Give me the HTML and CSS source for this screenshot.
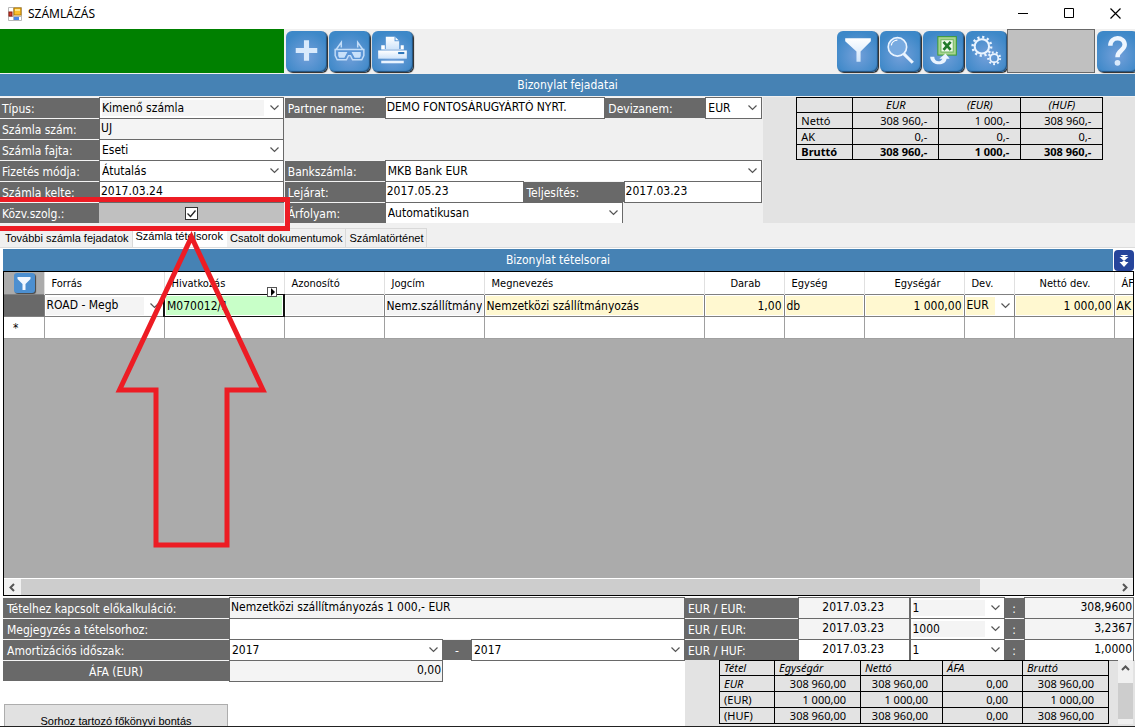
FILE: index.html
```html
<!DOCTYPE html>
<html lang="hu">
<head>
<meta charset="utf-8">
<title>SZÁMLÁZÁS</title>
<link rel="stylesheet" href="styles.css">
</head>
<body>
<header class="titlebar">
  <svg class="app-icon" width="14" height="14" viewBox="0 0 14 14"><path d="M.5.5h13v13H.5zM5.500 .5v13M.5 9.500h13" fill="#fff" stroke="#b8b8b8"/><rect x="6" y="1" width="7" height="7" fill="#fbc02d" stroke="#b57a00"/><path d="M7 2h5v2H7z" fill="#ffe48a"/><rect x="1" y="5" width="3" height="4" fill="#d2402c" stroke="#8e1b10"/><rect x="6" y="10" width="5" height="3" fill="#4a86e8"/></svg>
  <h1>SZÁMLÁZÁS</h1>
  <div class="window-buttons">
    <button aria-label="Kis méret"><svg width="11" height="11"><path d="M0 5.500h10" stroke="#000"/></svg></button>
    <button aria-label="Teljes méret"><svg width="11" height="11"><path d="M.5.5h9v9h-9z" fill="none" stroke="#000"/></svg></button>
    <button aria-label="Bezárás"><svg width="11" height="11"><path d="M.5.5l10 10M10.500 .5l-10 10" stroke="#000" stroke-width="1.200"/></svg></button>
  </div>
</header>

<div class="toolbar">
  <svg class="defs" width="0" height="0" aria-hidden="true">
    <defs>
      <linearGradient id="ice" x1="0" y1="0" x2="0" y2="1"><stop offset="0" stop-color="#fff"/><stop offset="1" stop-color="#cfe4fa"/></linearGradient>
    </defs>
  </svg>
  <div class="status"></div>
  <div class="tools">
    <button class="tool" aria-label="Új"><svg viewBox="0 0 40 40"><path d="M17.500 9h5v7.500h8v5h-8V29h-5v-7.500h-8v-5h8z" fill="#d9eafc"/></svg></button>
    <button class="tool" aria-label="Megtekintés"><svg viewBox="0 0 40 40"><path d="M7 18l5-7v5M33 18l-5-7v5" fill="none" stroke="#c3ddf8" stroke-width="1.500"/><path d="M6 18h28v6l-2 4h-9l-2-4h-2l-2 4H8l-2-4z" fill="#5b95d6" stroke="#c3ddf8" stroke-width="1.400"/><path d="M9 20.500h9l-3 5.500h-5l-1-1.500zM22 20.500h9v4l-1 1.500h-5z" fill="#c9e1fa"/></svg></button>
    <button class="tool" aria-label="Nyomtatás"><svg viewBox="0 0 40 40"><path d="M13.500 5.500h9l4 4v8h-13z" fill="url(#ice)"/><path d="M22.500 5.500v4h4" fill="none" stroke="#5d9ad8"/><path d="M9 14h3.500v3.500H28V14h3v4H9z" fill="#fff"/><path d="M6 19h28v8H6z" fill="url(#ice)"/><path d="M25.500 20.500h6v2h-6z" fill="#2d77bb"/><path d="M9 29h22v2.500H9z" fill="#eaf4ff"/></svg></button>
  </div>
  <div class="tools tools-right">
    <button class="tool" aria-label="Szűrő"><svg viewBox="0 0 40 40"><path d="M8 7h25v3L23 20v10h-4V20L8 10z" fill="url(#ice)"/></svg></button>
    <button class="tool" aria-label="Keresés"><svg viewBox="0 0 40 40"><circle cx="17" cy="15.500" r="9" fill="#78aae0" stroke="#eaf4ff" stroke-width="1.600"/><path d="M11 14a6 6 0 0 1 6-5" fill="none" stroke="#fff" stroke-width="1.200"/><path d="M23 22l9 9" stroke="#eaf4ff" stroke-width="3"/></svg></button>
    <button class="tool" aria-label="Excel export"><svg viewBox="0 0 40 40"><rect x="14.500" y="5.500" width="18" height="18" fill="#a8d58f" stroke="#3c9a35"/><rect x="17.500" y="8.500" width="12" height="12" fill="#f2faee" stroke="#6fb65f"/><path d="M20 10.500l7 8M27 10.500l-7 8" stroke="#217a2a" stroke-width="2.600"/><path d="M7 25c0 9 15 10 16 2l3 0-4-5-6 5h3c-2 4-8 3-8-2z" fill="#eaf4ff"/></svg></button>
    <button class="tool" aria-label="Beállítások"><svg viewBox="0 0 40 40" fill="none" stroke="#eaf4ff"><circle cx="15.500" cy="15" r="7" stroke-width="2"/><circle cx="15.500" cy="15" r="9" stroke-width="2.500" stroke-dasharray="2.100 2.612"/><circle cx="27.500" cy="26.500" r="4" stroke-width="1.800"/><circle cx="27.500" cy="26.500" r="5.800" stroke-width="2" stroke-dasharray="1.800 2.249"/></svg></button>
    <div class="blank"></div>
    <button class="tool" aria-label="Súgó"><svg viewBox="0 0 40 40"><path d="M13 14.500c0-10 14-9.500 14-1 0 5.500-7 5-7 12" fill="none" stroke="#eef6ff" stroke-width="4.400"/><circle cx="20" cy="31" r="2.800" fill="#d9eafc"/></svg></button>
  </div>
</div>

<h2 class="bar">Bizonylat fejadatai</h2>

<main>
<section class="head-form">
  <div class="col-left">
    <label for="tipus">Típus:</label><select id="tipus" class="locked"><option>Kimenő számla</option></select>
    <label for="szam">Számla szám:</label><input id="szam" class="ro" value="UJ" readonly>
    <label for="fajta">Számla fajta:</label><select id="fajta"><option>Eseti</option></select>
    <label for="fiz">Fizetés módja:</label><select id="fiz"><option>Átutalás</option></select>
    <label for="kelte">Számla kelte:</label><input id="kelte" value="2017.03.24">
    <label for="kozv">Közv.szolg.:</label><div class="check"><input type="checkbox" id="kozv" checked></div>
  </div>
  <div class="col-mid">
    <div class="line">
      <label for="partner">Partner name:</label><input id="partner" value="DEMO FONTOSÁRUGYÁRTÓ NYRT.">
      <label for="deviza">Devizanem:</label><select id="deviza" class="w-dev"><option>EUR</option></select>
    </div>
    <div class="line"></div>
    <div class="line"></div>
    <div class="line"><label for="bank">Bankszámla:</label><select id="bank"><option>MKB Bank EUR</option></select></div>
    <div class="line">
      <label for="lejarat">Lejárat:</label><input id="lejarat" value="2017.05.23">
      <label for="telj">Teljesítés:</label><input id="telj" value="2017.03.23">
    </div>
    <div class="line"><label for="arf">Árfolyam:</label><select id="arf" class="w-arf"><option>Automatikusan</option></select></div>
  </div>
  <div class="totals">
    <table class="sums">
      <colgroup><col class="c56"><col class="c86"><col class="c82"><col class="c82"></colgroup>
      <thead><tr><th></th><th>EUR</th><th>(EUR)</th><th>(HUF)</th></tr></thead>
      <tbody>
        <tr><td>Nettó</td><td>308 960,-</td><td>1 000,-</td><td>308 960,-</td></tr>
        <tr><td>AK</td><td>0,-</td><td>0,-</td><td>0,-</td></tr>
        <tr class="strong"><td>Bruttó</td><td>308 960,-</td><td>1 000,-</td><td>308 960,-</td></tr>
      </tbody>
    </table>
  </div>
</section>

<nav class="tabs">
  <button>További számla fejadatok</button>
  <button class="active">Számla tételsorok</button>
  <button>Csatolt dokumentumok</button>
  <button>Számlatörténet</button>
</nav>

<section class="page">
  <div class="page-head">
    <h2 class="bar">Bizonylat tételsorai</h2>
    <button class="expand" aria-label="Lenyitás"><svg width="20" height="20"><path d="M6.500 4h7v1h-2v1h3l-4.500 4-4.500-4h3V5h-1zM8.500 10h3v1h3l-4.500 5-4.500-5h3z" fill="#fff"/></svg></button>
  </div>
  <div class="grid">
    <div class="rows">
    <table class="items">
      <colgroup><col class="c40"><col class="c120"><col class="c120"><col class="c100"><col class="c100"><col class="c220"><col class="c80"><col class="c80"><col class="c100"><col class="c50"><col class="c100"><col class="c50"></colgroup>
      <thead><tr>
        <th class="corner"><button class="mini" aria-label="Szűrő"><svg width="20" height="20"><path d="M3.500 4h13v2l-5 5v6h-3v-6l-5-5z" fill="#f2f8ff"/></svg></button></th>
        <th>Forrás</th><th>Hivatkozás</th><th>Azonosító</th><th>Jogcím</th><th>Megnevezés</th><th class="num">Darab</th><th>Egység</th><th class="num">Egységár</th><th>Dev.</th><th class="num">Nettó dev.</th><th>ÁFA</th>
      </tr></thead>
      <tbody>
        <tr class="filled">
          <td class="current"></td>
          <td><select class="locked" aria-label="Forrás"><option>ROAD - Megb</option></select></td>
          <td class="picked">M070012/1<button class="more" aria-label="Tovább"><svg width="8" height="8"><path d="M3 0l4 4-4 4z" fill="#000"/></svg></button></td>
          <td class="grey"></td>
          <td class="grey"><div class="clip">Nemz.szállítmányozás</div></td>
          <td class="yellow">Nemzetközi szállítmányozás</td>
          <td class="yellow num">1,00</td>
          <td class="yellow">db</td>
          <td class="yellow num">1 000,00</td>
          <td><select class="locked cream" aria-label="Dev."><option>EUR</option></select></td>
          <td class="yellow num">1 000,00</td>
          <td class="yellow">AK</td>
        </tr>
        <tr class="new"><td class="star">*</td><td></td><td></td><td></td><td></td><td></td><td></td><td></td><td></td><td></td><td></td><td></td></tr>
      </tbody>
    </table>
    </div>
    <div class="hscroll">
      <button aria-label="Balra"><svg width="16" height="15"><path d="M10 4L6.500 7.500 10 11" fill="none" stroke="#555" stroke-width="2"/></svg></button>
      <div class="track"><div class="thumb"></div></div>
      <button aria-label="Jobbra"><svg width="16" height="15"><path d="M6 4l3.500 3.500L6 11" fill="none" stroke="#555" stroke-width="2"/></svg></button>
    </div>
  </div>
</section>

<section class="foot">
  <div class="foot-left">
    <div class="line"><label for="elo">Tételhez kapcsolt előkalkuláció:</label><input id="elo" class="ro" value="Nemzetközi szállítmányozás 1 000,- EUR" readonly></div>
    <div class="line"><label for="megj">Megjegyzés a tételsorhoz:</label><input id="megj"></div>
    <div class="line"><label for="am1">Amortizációs időszak:</label><select id="am1" class="w-year"><option>2017</option></select><label for="am2" class="dash">-</label><select id="am2"><option>2017</option></select></div>
    <div class="line"><label for="afa" class="centered">ÁFA (EUR)</label><input id="afa" class="ro num w-year" value="0,00" readonly></div>
    <button class="split">Sorhoz tartozó főkönyvi bontás</button>
  </div>
  <div class="foot-right">
    <div class="line"><label for="d1">EUR / EUR:</label><input id="d1" class="ro date" value="2017.03.23"><select class="locked" aria-label="Egység 1"><option>1</option></select><span class="colon">:</span><input class="ro num" aria-label="Árfolyam 1" value="308,9600"></div>
    <div class="line"><label for="d2">EUR / EUR:</label><input id="d2" class="ro date" value="2017.03.23"><select class="locked" aria-label="Egység 2"><option>1000</option></select><span class="colon">:</span><input class="ro num" aria-label="Árfolyam 2" value="3,2367"></div>
    <div class="line"><label for="d3">EUR / HUF:</label><input id="d3" class="date" value="2017.03.23"><select aria-label="Egység 3"><option>1</option></select><span class="colon">:</span><input class="num" aria-label="Árfolyam 3" value="1,0000"></div>
    <div class="breakdown">
      <table class="sums detail">
        <colgroup><col class="c55"><col class="c86"><col class="c82"><col class="c80"><col class="c86"></colgroup>
        <thead><tr><th>Tétel</th><th>Egységár</th><th>Nettó</th><th>ÁFA</th><th>Bruttó</th></tr></thead>
        <tbody>
          <tr><td><em>EUR</em></td><td>308 960,00</td><td>308 960,00</td><td>0,00</td><td>308 960,00</td></tr>
          <tr><td>(EUR)</td><td>1 000,00</td><td>1 000,00</td><td>0,00</td><td>1 000,00</td></tr>
          <tr><td>(HUF)</td><td>308 960,00</td><td>308 960,00</td><td>0,00</td><td>308 960,00</td></tr>
        </tbody>
      </table>
      <div class="vscroll">
        <button aria-label="Fel"><svg width="15" height="16"><path d="M4 10l3.500-3.500L11 10" fill="none" stroke="#555" stroke-width="2"/></svg></button>
        <div class="vthumb"></div>
      </div>
    </div>
  </div>
</section>
</main>

<svg class="callout" width="300" height="560" aria-hidden="true">
  <path d="M-5 199.500H287.500V228.500H-5" fill="none" stroke="#ed1c24" stroke-width="5"/>
  <path d="M191.500 237L263 390H227V545H156V390H119.500Z" fill="none" stroke="#ed1c24" stroke-width="5"/>
</svg>
</body>
</html>
```
FILE: styles.css
```css
* { box-sizing: border-box; }

body {
  margin: 0;
  height: 100vh;
  position: relative;
  display: flex;
  flex-direction: column;
  overflow: hidden;
  background: #fff;
  border-bottom: 1px solid #222;
  color: #000;
  font: 12px/20px "DejaVu Sans Condensed", "DejaVu Sans", sans-serif;
}

input, select, button { font: inherit; color: inherit; margin: 0; border-radius: 0; }
button { padding: 0; border: 0; background: none; }
h1, h2 { margin: 0; font-weight: 400; }
svg { display: block; }
.defs, .callout { position: absolute; top: 0; left: 0; pointer-events: none; }

main { flex: 1; min-height: 0; display: flex; flex-direction: column; }

/* Title bar */
.titlebar { display: flex; align-items: center; height: 29px; padding: 0 14px 2px 8px; gap: 6px; }
.titlebar h1 { font: 12px/16px "Noto Sans", sans-serif; }
.window-buttons { display: flex; margin-left: auto; gap: 35px; }

/* Toolbar */
.toolbar { display: flex; height: 45px; background: #f0f0f0; overflow: hidden; }
.status { width: 25%; height: 44px; background: #008000; }
.tools { display: flex; gap: 2px; padding: 2px; }
.tools-right { margin-left: auto; margin-right: -5px; }
.tool {
  flex: none;
  width: 41px;
  height: 41px;
  border-radius: 6px;
  background: radial-gradient(circle at 50% 60%, #74a0da, #3d88c8 75%);
  box-shadow: inset -1px -1px 1px #24507a, 1px 1px 1px #222;
}
.blank { width: 88px; height: 44px; margin: -2px 0 0 -2px; background: #c0c0c0; border: 1px solid #696969; }

.bar { height: 22px; background: #4682b4; color: #fff; font-size: 12px; line-height: 23px; text-align: center; }

/* Form fields */
label, .colon {
  flex: none;
  height: 21px;
  padding-left: 2px;
  background: #696969;
  border-top: 1px solid #f4f4f4;
  color: #fff;
  line-height: 22px;
  white-space: nowrap;
}
.line { display: flex; height: 21px; }
input:not([type]), select {
  flex: 1 1 0;
  width: 100%;
  min-width: 0;
  height: 21px;
  padding: 0 2px 3px 1px;
  border: 1px solid #696969;
  border-bottom: 0;
  box-shadow: 0 1px 0 #696969;
  background: #fff;
  outline: 0;
}
select {
  appearance: none;
  padding: 0 20px 1px 2px;
  background: #fff url("data:image/svg+xml,%3Csvg xmlns='http://www.w3.org/2000/svg' width='9' height='6'%3E%3Cpath d='M.5.5l4 4 4-4' fill='none' stroke='%23555' stroke-width='1.200'/%3E%3C/svg%3E") no-repeat right 4px center;
}
select.locked {
  box-shadow: 0 1px 0 #696969, inset 0 0 0 2px #fff;
  background-image: url("data:image/svg+xml,%3Csvg xmlns='http://www.w3.org/2000/svg' width='9' height='6'%3E%3Cpath d='M.5.5l4 4 4-4' fill='none' stroke='%23555' stroke-width='1.200'/%3E%3C/svg%3E"), linear-gradient(to left, #fff 19px, #f4f4f4 19px);
  background-repeat: no-repeat;
  background-position: right 4px center, 0 0;
}
select.cream {
  background-image: url("data:image/svg+xml,%3Csvg xmlns='http://www.w3.org/2000/svg' width='9' height='6'%3E%3Cpath d='M.5.5l4 4 4-4' fill='none' stroke='%23555' stroke-width='1.200'/%3E%3C/svg%3E"), linear-gradient(to left, #fff 19px, #fff8d0 19px);
}
input.ro { background: #f4f4f4; }
input.num { text-align: right; padding-right: 1px; }

/* Document header */
.head-form {
  display: grid;
  grid-template-columns: 284fr 478fr 372fr;
  column-gap: 1px;
  padding-top: 1px;
  background: #f0f0f0;
}
.col-left { display: grid; grid-template-columns: 99px 1fr; grid-auto-rows: 21px; }
.col-mid label { width: 100px; padding-left: 3px; }
.col-mid .w-dev { flex: 0 0 57px; }
.col-mid .w-arf { flex: 0 0 238px; }
.check { display: flex; align-items: center; justify-content: center; background: #c0c0c0; border-top: 1px solid #696969; }
.check input {
  appearance: none;
  width: 13px;
  height: 13px;
  border: 1px solid #333;
  background: #fff url("data:image/svg+xml,%3Csvg xmlns='http://www.w3.org/2000/svg' width='11' height='11'%3E%3Cpath d='M1.500 5.500l3 3 5-6' fill='none' stroke='%23222' stroke-width='1.300'/%3E%3C/svg%3E");
}
.totals { background: #e3e3e3; padding-left: 33px; }

.sums { border-collapse: collapse; table-layout: fixed; width: 306px; font: 11px/15px "Noto Sans", sans-serif; background: #e3e3e3; }
.sums th, .sums td { height: 16px; padding: 0 11px 0 4px; border: 1px solid #000; line-height: 15px; text-align: right; white-space: nowrap; }
.sums th { height: 15px; padding: 0 4px; line-height: 14px; font-weight: 400; font-style: italic; text-align: center; }
.sums td:first-child { text-align: left; padding-right: 0; }
.sums .strong { font-weight: 700; }
.sums .strong td { height: 15px; line-height: 14px; }
.detail { width: 388px; }
.detail th { text-align: left; }
.detail td { padding-right: 14px; }

/* Tabs */
.tabs { display: flex; align-items: flex-end; height: 25px; padding-left: 2px; background: #f0f0f0; border-bottom: 1px solid #dcdcdc; font: 11px/19px "Liberation Sans", Arial, sans-serif; }
.tabs button { height: 19px; padding: 0 3px; border: 1px solid #d9d9d9; border-bottom: 0; border-left: 0; white-space: nowrap; }
.tabs .active { height: 21px; padding-bottom: 2px; background: #fff; border-color: #fff; }

/* Item grid */
.page { flex: 1; min-height: 0; display: flex; flex-direction: column; padding: 1px 1px 1px 3px; }
.page-head { display: flex; gap: 1px; }
.page-head .bar { flex: 1; }
.expand { width: 20px; height: 21px; margin-top: 1px; border-radius: 4px; background: #26459b; }
.grid { flex: 1; min-height: 0; display: flex; flex-direction: column; background: #ababab; border: 1px solid #000; }
.rows { flex: 1; min-height: 0; overflow: hidden; }
.items { border-collapse: collapse; table-layout: fixed; width: 1160px; }
.items th { height: 22px; padding: 2px 7px 0; background: #fff; border-right: 1px solid #e0e0e0; font: 11px/20px "DejaVu Sans Condensed", sans-serif; text-align: left; white-space: nowrap; }
.items td { height: 22px; padding: 1px 2px 0; background: #fff; border: 1px solid #808080; line-height: 19px; white-space: nowrap; }
.items tbody td:first-child { border-left: 0; }
.items .new td { border-color: #a0a0a0; }
.items th.num { padding-right: 23px; text-align: right; }
.items td.num { text-align: right; }
.items th.corner { padding: 0 0 0 10px; background: #ababab; }
.items td.current { background: #696969; }
.items .filled td:not(.current) { box-shadow: inset 0 0 0 1px #fff; }
.items td.grey { background: #f4f4f4; }
.items td.yellow { background: #fff8d0; }
.items td.picked { position: relative; background: #c8ffc8; border: 2px solid #111; border-width: 1px 2px; }
.items td:has(select) { padding: 0; }
.items select { display: block; height: 20px; padding-bottom: 0; border: 0; box-shadow: inset 0 0 0 1px #fff; }
.items td.star { padding-left: 9px; }
.clip { overflow: hidden; }
.more { position: absolute; top: -8px; right: 6px; width: 10px; height: 10px; border: 1px solid #555; background: #fff; }
.mini { display: block; width: 21px; height: 20px; border-radius: 3px; background: #4c8fd0; box-shadow: 1px 1px 1px #444; }

.hscroll { display: flex; height: 17px; background: #f0f0f0; border-top: 1px solid #fff; }
.track { flex: 1; padding-left: 1px; }
.thumb { width: 87.500%; height: 16px; background: #cdcdcd; }

.c40 { width: 40px; } .c50 { width: 50px; } .c55 { width: 55px; } .c56 { width: 56px; }
.c80 { width: 80px; } .c82 { width: 82px; } .c86 { width: 86px; }
.c100 { width: 100px; } .c120 { width: 120px; } .c220 { width: 220px; }

/* Footer form */
.foot { display: grid; grid-template-columns: 685fr 450fr; height: 129px; overflow: hidden; }
.foot-left { padding-left: 3px; }
.foot-right { background: #e3e3e3; }
.foot-left label { width: 226px; padding-left: 4px; }
.foot-left .dash { width: 28px; padding: 0; text-align: center; }
.foot-left .centered { padding: 0; text-align: center; }
.foot-left .w-year { flex: 0 0 214px; }
.foot-right .line { background: #fff; padding-right: 1px; }
.foot-right label { width: 113px; padding-left: 3px; }
.foot-right .date { text-align: center; }
.foot-right select { flex: 0 0 95px; }
.foot-right .colon { width: 19px; padding: 0; text-align: center; }
.split { display: block; width: 224px; height: 34px; margin: 23px 0 0 1px; border: 1px solid #adadad; background: #e1e1e1; font: 11px/30px "Liberation Sans", Arial, sans-serif; }
.breakdown { display: flex; justify-content: space-between; padding: 0 2px 0 34px; }
.vscroll { width: 15px; background: #f0f0f0; }
.vthumb { height: 36px; margin-top: 1px; background: #cdcdcd; }
```
